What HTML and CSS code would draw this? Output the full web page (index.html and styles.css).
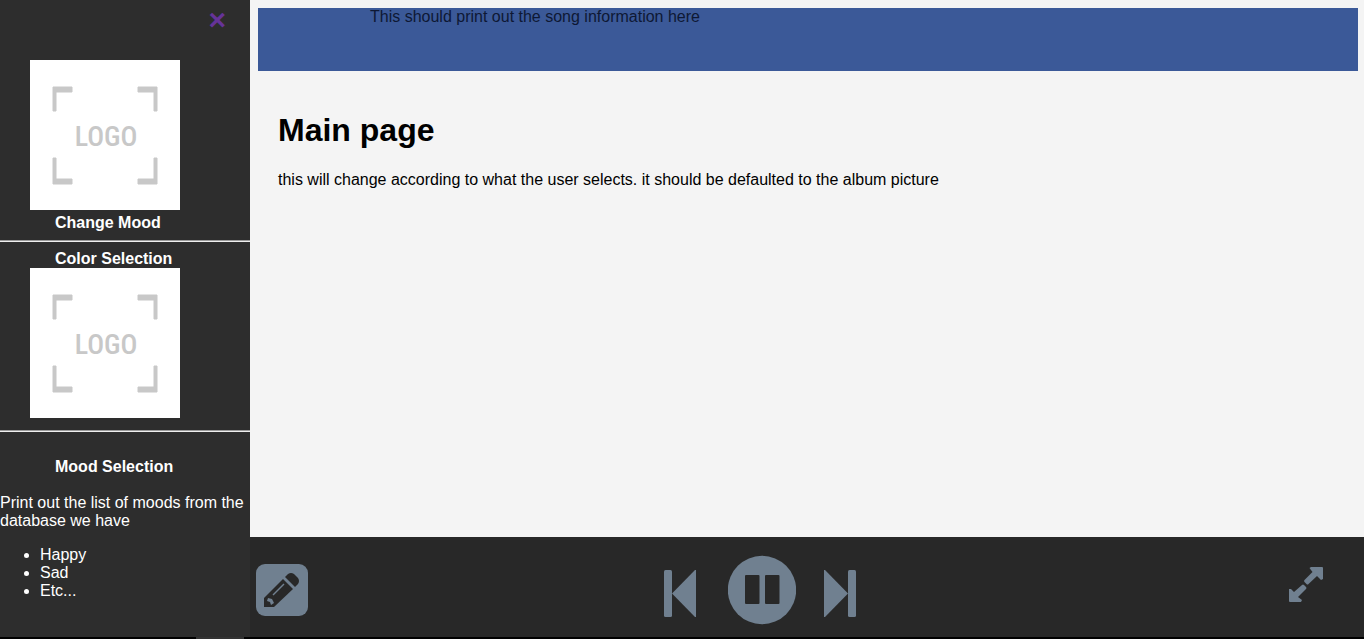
FILE: index.html
```html
<!DOCTYPE html>
<html lang="en">
<head>
<meta charset="utf-8">
<title>Music player</title>
<link rel="stylesheet" href="styles.css">
</head>
<body>
<div class="app">
  <nav class="sidebar">
    <button class="close" aria-label="Close menu">×</button>
    <section class="mood">
      <svg class="logo" viewBox="0 0 150 150" role="img" aria-label="Logo">
        <path d="M23 27h19v5H26v19h-3zM108 27h19v24h-3V32h-16zM23 98h3v21h16v5H23zM124 98h3v26h-19v-5h16z" fill="#c8c8c8" stroke="#c8c8c8" stroke-width="1"/>
        <text class="logo-text" x="76" y="86" text-anchor="middle">LOGO</text>
      </svg>
      <h2 class="label">Change Mood</h2>
    </section>
    <hr class="rule">
    <section class="color">
      <h2 class="label">Color Selection</h2>
      <svg class="logo" viewBox="0 0 150 150" role="img" aria-label="Logo">
        <path d="M23 27h19v5H26v19h-3zM108 27h19v24h-3V32h-16zM23 98h3v21h16v5H23zM124 98h3v26h-19v-5h16z" fill="#c8c8c8" stroke="#c8c8c8" stroke-width="1"/>
        <text class="logo-text" x="76" y="86" text-anchor="middle">LOGO</text>
      </svg>
    </section>
    <hr class="rule">
    <section class="list">
      <h2 class="label">Mood Selection</h2>
      <p class="copy">Print out the list of moods from the database we have</p>
      <ul class="moods">
        <li>Happy</li>
        <li>Sad</li>
        <li>Etc...</li>
      </ul>
    </section>
  </nav>
  <div class="content">
    <header class="song">This should print out the song information here</header>
    <main class="main">
      <h1 class="title">Main page</h1>
      <p class="copy">this will change according to what the user selects. it should be defaulted to the album picture</p>
    </main>
    <footer class="player">
      <button class="control" aria-label="Edit">
        <svg width="52" height="52" viewBox="0 0 52 52">
          <rect width="52" height="52" rx="9" fill="#708090"/>
          <path d="M8 34L27 15l10 10-19 18H8z" fill="#282828"/>
          <path d="M29 13l3-3q3-2 6 0l4 4q2 3 0 6l-3 3z" fill="#282828"/>
          <path d="M17 31L28 20" stroke="#708090" stroke-width="1.5"/>
          <path d="M12 34l4 1 2 4-3 2-1-3-3-1z" fill="#708090"/>
        </svg>
      </button>
      <div class="transport">
        <button class="control skip" aria-label="Previous">
          <svg width="36" height="48" viewBox="0 0 36 48" fill="#708090"><rect width="8" height="47" rx="1.5"/><path d="M8 23.5L31 0h1v47h-1z"/></svg>
        </button>
        <button class="control" aria-label="Pause">
          <svg width="68" height="70" viewBox="0 0 68 70"><circle cx="34" cy="35" r="34.2" fill="#708090"/><rect x="17" y="20" width="14.5" height="29" rx="1" fill="#282828"/><rect x="37" y="20" width="14.5" height="29" rx="1" fill="#282828"/></svg>
        </button>
        <button class="control skip" aria-label="Next">
          <svg width="32" height="48" viewBox="0 0 32 48" fill="#708090"><rect x="24" width="8" height="47" rx="1.5"/><path d="M0 0h1L24 23.5 1 47H0z"/></svg>
        </button>
      </div>
      <button class="control expand" aria-label="Full screen">
        <svg width="36" height="36" viewBox="0 0 36 36" fill="#708090"><path d="M23 0H34q1 0 1 1V12l-2 1-4-4-8.500 8q-1 1-2 0l-2-2q-1-1 0-2l8-8-3-4zM1 22l2 0 3 3 8-7q1-1 2 0l2 2q1 1 0 2l-8 8 4 3-1 2H2q-1 0-1-1z"/></svg>
      </button>
    </footer>
  </div>
</div>
<div class="edge"><div class="edge-thumb"></div></div>
</body>
</html>
```

FILE: styles.css
```css
* { box-sizing: border-box; }

body {
  display: flex;
  flex-direction: column;
  min-height: 100vh;
  margin: 0;
  background: #f4f4f4;
  color: #000;
  font: 16px/18px "Liberation Sans", Arial, sans-serif;
}

.app {
  display: grid;
  grid-template-columns: 250px 1fr;
  flex: 1;
}

.sidebar {
  display: flex;
  flex-direction: column;
  background: #2d2d2d;
  color: #fff;
}

.close {
  align-self: flex-end;
  height: 40px;
  margin: 0 24px 20px 0;
  padding: 0;
  border: 0;
  background: none;
  color: #663399;
  font: bold 30px/40px "Liberation Sans", Arial, sans-serif;
}

.logo {
  display: block;
  width: 150px;
  height: 150px;
  margin-left: 30px;
  overflow: visible;
  background: #fff;
}

.logo-text {
  fill: #c8c8c8;
  font: 500 28px "Roboto Condensed", "Liberation Sans Narrow", "Arial Narrow", sans-serif;
}

.label {
  margin: 0;
  padding-left: 55px;
  font-size: 16px;
}

.mood { padding-bottom: 8px; }
.mood .label { padding-top: 4px; }
.color { padding: 8px 0 12px; }
.list { padding-top: 26px; }

.rule {
  width: 100%;
  height: 2px;
  margin: 0;
  border: 0;
  border-top: 1px solid #9a9a9a;
  background: #eee;
}

.copy { margin: 0; }
.list .copy { margin-top: 18px; }

.moods {
  margin: 16px 0;
  padding-left: 40px;
}

.content {
  display: flex;
  flex-direction: column;
  min-width: 0;
}

.song {
  min-height: 63px;
  margin: 8px 6px 0 8px;
  padding-left: 112px;
  background: #3b5998;
  color: #0e1834;
}

.main {
  flex: 1;
  padding: 41px 28px;
}

.title {
  margin: 0 0 22px;
  font-size: 32px;
  line-height: 37px;
}

.player {
  display: flex;
  align-items: center;
  height: 100px;
  padding: 6px 40px 0 6px;
  background: #282828;
}

.control {
  padding: 0;
  border: 0;
  background: none;
}

.control svg { display: block; }

.transport {
  display: flex;
  align-items: center;
  gap: 28px;
  margin-left: 356px;
  margin-left: calc(33% + 4px);
}

.skip { padding-top: 8px; }

.expand {
  margin-left: auto;
  margin-bottom: 10px;
}

.edge {
  height: 2px;
  padding-left: 196px;
  background: #000;
}

.edge-thumb {
  width: 48px;
  height: 2px;
  background: #333;
}
```
